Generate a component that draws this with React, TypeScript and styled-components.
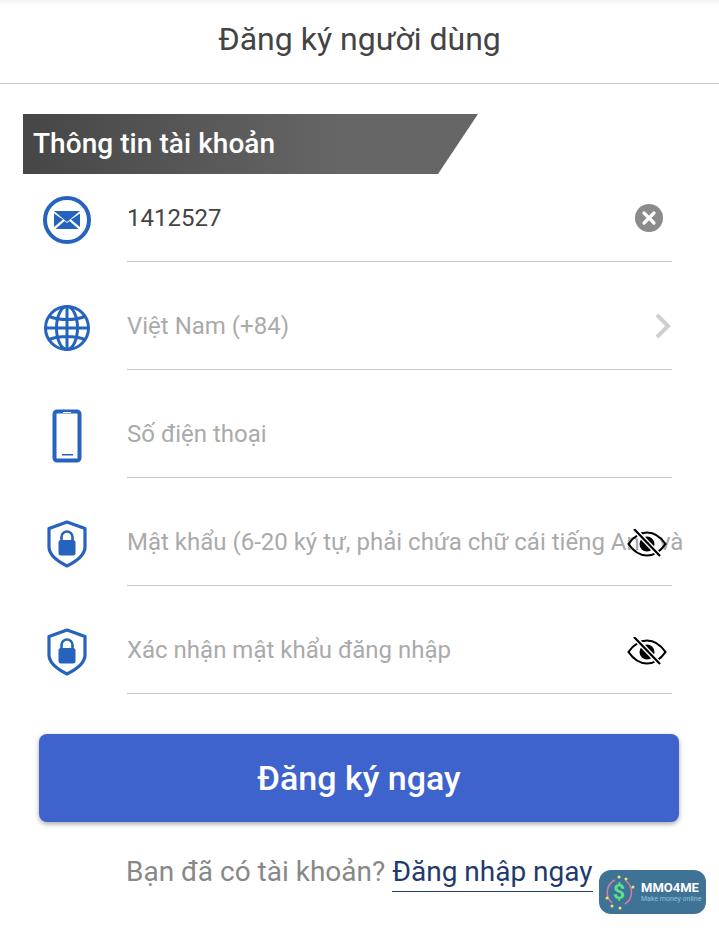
import styled, { createGlobalStyle } from "styled-components";

const GlobalStyle = createGlobalStyle`
  * { box-sizing: border-box; }
  html, body { margin: 0; padding: 0; background: #fff; }
  body { font-family: Roboto, "Noto Sans", sans-serif; }
`;

const Page = styled.div`
  position: relative;
  width: 719px;
  height: 932px;
  overflow: hidden;
  background: #fff;
`;

const Header = styled.header`
  height: 84px;
  display: flex;
  align-items: center;
  justify-content: center;
  padding-bottom: 5px;
  border-bottom: 1px solid #c8c8c8;
  background: linear-gradient(#f3f3f3, #fff 5px);
  font-size: 32px;
  color: #444;
`;

const SectionTitle = styled.h2`
  width: 455px;
  height: 60px;
  margin: 30px 0 0 23px;
  padding-left: 10px;
  padding-bottom: 2px;
  display: flex;
  align-items: center;
  font-size: 28px;
  font-weight: 500;
  letter-spacing: 0.05px;
  color: #fff;
  background: linear-gradient(90deg, #464646, #666 70%);
  clip-path: polygon(0 0, 100% 0, calc(100% - 40px) 100%, 0 100%);
`;

const Form = styled.form`
  display: flex;
  flex-direction: column;
  gap: 20px;
`;

const Row = styled.div`
  display: flex;
  align-items: center;
  padding-left: 23px;
`;

const IconCell = styled.div`
  flex: 0 0 88px;
  margin-right: 16px;
  display: flex;
  justify-content: center;
  padding-top: 3px;
`;

const Field = styled.div`
  position: relative;
  flex: 0 0 545px;
  min-width: 0;
  height: 88px;
  display: flex;
  align-items: center;
  border-bottom: 1px solid #c8c8c8;
`;

const Input = styled.input`
  flex: none;
  width: 556px;
  height: 40px;
  padding: 0;
  border: 0;
  outline: 0;
  background: transparent;
  font-family: inherit;
  font-size: 24px;
  color: #444;

  &::placeholder {
    color: #aaa;
    opacity: 1;
  }
`;

const Trailing = styled.button<{ $right: number; $drop?: number }>`
  position: absolute;
  top: calc(50% + ${(p) => p.$drop ?? 0}px);
  right: ${(p) => p.$right}px;
  transform: translateY(-50%);
  display: flex;
  padding: 0;
  border: 0;
  background: none;
`;

const SubmitButton = styled.button`
  display: block;
  width: 640px;
  height: 88px;
  margin: 40px 0 0 39px;
  border: 0;
  border-radius: 8px;
  background: #3e63cc;
  box-shadow: 0 2px 5px rgba(0, 0, 0, 0.35);
  font-family: inherit;
  font-size: 34px;
  font-weight: 500;
  color: #fff;
`;

const Footer = styled.p`
  margin: 30px 0 0;
  padding-left: 126px;
  font-size: 28px;
  line-height: 40px;
  color: #888;
  white-space: nowrap;
`;

const LoginLink = styled.a`
  color: #1f3a6e;
  padding-bottom: 3px;
  border-bottom: 1px solid #1f3a6e;
`;

const Badge = styled.div`
  position: absolute;
  left: 599px;
  top: 870px;
  width: 107px;
  height: 44px;
  display: flex;
  align-items: center;
  gap: 3px;
  padding-left: 3px;
  border-radius: 12px;
  background: #3f7396;

  svg {
    flex: none;
  }
`;

const BadgeText = styled.div`
  display: flex;
  flex-direction: column;
  font-family: Roboto, sans-serif;
`;

const BadgeName = styled.span`
  font-size: 13px;
  line-height: 14px;
  font-weight: 700;
  color: #fff;
`;

const BadgeTagline = styled.span`
  font-size: 7px;
  line-height: 9px;
  color: #8fc3dc;
  white-space: nowrap;
`;

const BLUE = "#2563be";

const MailIcon = () => (
  <svg width="48" height="48" viewBox="0 0 48 48">
    <circle cx="24" cy="24" r="22" fill="none" stroke={BLUE} strokeWidth="4" />
    <path d="M11 15h26L24 26z" fill={BLUE} />
    <path d="M11 17.500v13.500l9-7.500zM37 17.500v13.500l-9-7.500zM12.500 33h23l-9-8-2.500 2-2.500-2z" fill={BLUE} />
  </svg>
);

const GlobeIcon = () => (
  <svg width="48" height="48" viewBox="0 0 48 48" fill="none" stroke={BLUE} strokeWidth="3">
    <circle cx="24" cy="24" r="21.500" />
    <ellipse cx="24" cy="24" rx="10.500" ry="21.500" />
    <path d="M24 2.500v43M2.500 24h43M6 12.500c10 4 26 4 36 0M6 35.500c10-4 26-4 36 0" />
  </svg>
);

const PhoneIcon = () => (
  <svg width="30" height="54" viewBox="0 0 30 54">
    <rect x="2.500" y="2.500" width="25" height="49" rx="2.500" fill="none" stroke={BLUE} strokeWidth="4" />
    <rect x="10" y="45" width="11" height="1.500" fill={BLUE} />
    <rect x="11" y="3" width="8" height="1" fill="#fff" />
  </svg>
);

const ShieldIcon = () => (
  <svg width="40" height="48" viewBox="0 0 40 48">
    <path d="M20 2 38 8.500V27c0 8-8 14-18 19C10 41 2 35 2 27V8.500z" fill="none" stroke={BLUE} strokeWidth="3.200" strokeLinejoin="round" />
    <rect x="11.500" y="20" width="17" height="15.500" rx="2.500" fill={BLUE} />
    <path d="M14.500 21v-4a5.500 5.500 0 0 1 11 0v4" fill="none" stroke={BLUE} strokeWidth="2.600" />
  </svg>
);

const ClearIcon = () => (
  <svg width="28" height="28" viewBox="0 0 28 28">
    <circle cx="14" cy="14" r="14" fill="#8b8b8b" />
    <path d="M9 9l10 10M19 9 9 19" stroke="#fff" strokeWidth="3.200" strokeLinecap="round" />
  </svg>
);

const ChevronIcon = () => (
  <svg width="16" height="26" viewBox="0 0 16 26">
    <path d="M2 2l11 11L2 24" fill="none" stroke="#cfcfcf" strokeWidth="4" />
  </svg>
);

const EyeOffIcon = () => (
  <svg width="40" height="30" viewBox="0 -1 40 30" fill="none" stroke="#000" strokeWidth="2.200">
    <path d="M1.500 14C7 6 13 2.500 20 2.500S33 6 38.500 14C33 22 27 25.500 20 25.500S7 22 1.500 14z" />
    <circle cx="20" cy="14" r="7.500" fill="#000" stroke="none" />
    <path d="M7-1l26 27" stroke="#fff" strokeWidth="5" />
    <path d="M7-1l26 27" />
  </svg>
);

const LogoMark = () => (
  <svg width="36" height="38" viewBox="0 0 36 38">
    <path d="M10 30A14 14 0 0 1 13 7" fill="none" stroke="#d77fa0" strokeWidth="1.500" />
    <path d="M24 8a14 14 0 0 1-1 23" fill="none" stroke="#d77fa0" strokeWidth="1.500" />
    <text x="17" y="26" textAnchor="middle" fontSize="21" fontWeight="700" fill="#5fe08a" fontFamily="Roboto, sans-serif">$</text>
    <g fill="#f5e26a">
      <circle cx="17" cy="4" r="1.500" />
      <circle cx="24" cy="6" r="1.500" />
      <circle cx="31" cy="14" r="1.500" />
      <circle cx="5" cy="25" r="1.500" />
      <circle cx="10" cy="33" r="1.500" />
      <circle cx="18" cy="35" r="1.500" />
    </g>
  </svg>
);

export default function App() {
  return (
    <Page>
      <GlobalStyle />
      <Header>Đăng ký người dùng</Header>
      <SectionTitle>Thông tin tài khoản</SectionTitle>
      <Form onSubmit={(e) => e.preventDefault()}>
        <Row>
          <IconCell>
            <MailIcon />
          </IconCell>
          <Field>
            <Input defaultValue="1412527" />
            <Trailing type="button" $right={9}>
              <ClearIcon />
            </Trailing>
          </Field>
        </Row>
        <Row>
          <IconCell>
            <GlobeIcon />
          </IconCell>
          <Field>
            <Input placeholder="Việt Nam (+84)" readOnly />
            <Trailing type="button" $right={1}>
              <ChevronIcon />
            </Trailing>
          </Field>
        </Row>
        <Row>
          <IconCell>
            <PhoneIcon />
          </IconCell>
          <Field>
            <Input placeholder="Số điện thoại" />
          </Field>
        </Row>
        <Row>
          <IconCell>
            <ShieldIcon />
          </IconCell>
          <Field>
            <Input placeholder="Mật khẩu (6-20 ký tự, phải chứa chữ cái tiếng Anh và số)" />
            <Trailing type="button" $right={5} $drop={2}>
              <EyeOffIcon />
            </Trailing>
          </Field>
        </Row>
        <Row>
          <IconCell>
            <ShieldIcon />
          </IconCell>
          <Field>
            <Input placeholder="Xác nhận mật khẩu đăng nhập" />
            <Trailing type="button" $right={5} $drop={2}>
              <EyeOffIcon />
            </Trailing>
          </Field>
        </Row>
      </Form>
      <SubmitButton type="submit">Đăng ký ngay</SubmitButton>
      <Footer>
        Bạn đã có tài khoản? <LoginLink>Đăng nhập ngay</LoginLink>
      </Footer>
      <Badge>
        <LogoMark />
        <BadgeText>
          <BadgeName>MMO4ME</BadgeName>
          <BadgeTagline>Make money online</BadgeTagline>
        </BadgeText>
      </Badge>
    </Page>
  );
}
